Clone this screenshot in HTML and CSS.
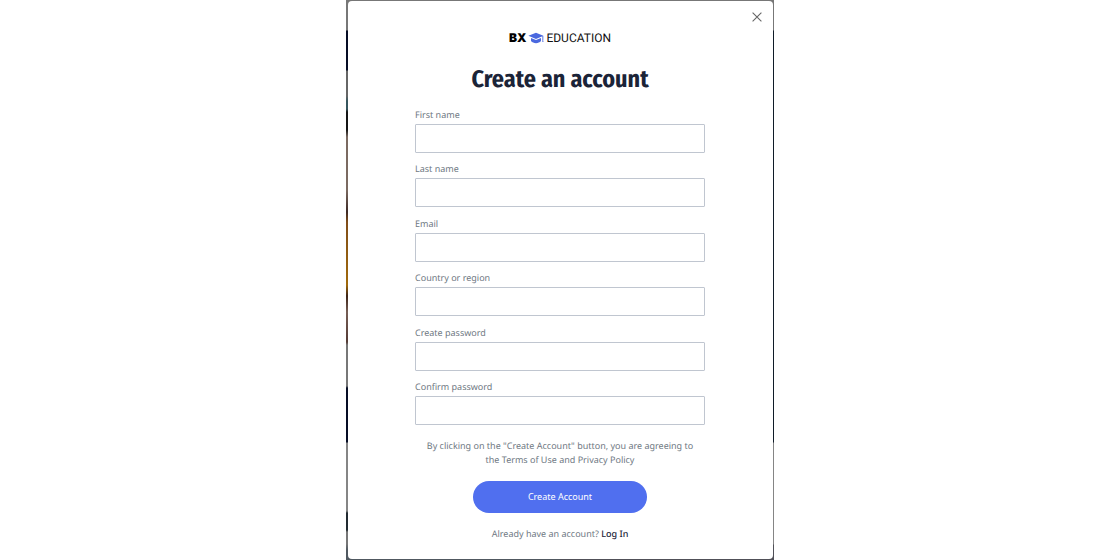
FILE: index.html
```html
<!DOCTYPE html>
<html lang="en">
<head>
<meta charset="utf-8">
<meta name="viewport" content="width=device-width, initial-scale=1">
<title>Create an account</title>
<link rel="stylesheet" href="styles.css">
</head>
<body>
<div class="backdrop">
  <main class="dialog" role="dialog" aria-labelledby="title">
    <button class="close" type="button" aria-label="Close">
      <svg viewBox="0 0 10 10" width="10" height="10" aria-hidden="true"><path d="M.6.6 9.4 9.4M9.4.6.6 9.4"/></svg>
    </button>
    <div class="logo">
      <span class="logo-mark">BX</span>
      <svg class="logo-cap" viewBox="0 0 16 12" width="16" height="12" aria-hidden="true">
        <path d="M8 .8.4 3.800 8 6.900l6.400-2.600v3.900h.9V3.800z"/>
        <path d="M3 5.900v3.200c1.200 1.500 3 2.100 5 2.100s3.800-.6 5-2.100V5.900L8 7.900z"/>
        <path d="m14.800 7.700-.8 2h1.700z"/>
      </svg>
      <span>EDUCATION</span>
    </div>
    <h1 class="title" id="title">Create an account</h1>
    <form class="form">
      <div class="fields">
        <div class="field"><label for="first">First name</label><input id="first" type="text"></div>
        <div class="field"><label for="last">Last name</label><input id="last" type="text"></div>
        <div class="field"><label for="email">Email</label><input id="email" type="email"></div>
        <div class="field"><label for="country">Country or region</label><input id="country" type="text"></div>
        <div class="field"><label for="password">Create password</label><input id="password" type="password"></div>
        <div class="field"><label for="confirm">Confirm password</label><input id="confirm" type="password"></div>
      </div>
      <p class="terms">By clicking on the "Create Account" button, you are agreeing to the Terms of Use and Privacy Policy</p>
      <button class="submit" type="submit">Create Account</button>
      <p class="login">Already have an account? <a href="#login">Log In</a></p>
    </form>
  </main>
</div>
</body>
</html>
```
FILE: styles.css
```css
* {
  box-sizing: border-box;
}

body {
  margin: 0;
  background: #fff;
  color: #6f7983;
  font: 9px/14px "Noto Sans", sans-serif;
  text-rendering: geometricPrecision;
}

.backdrop {
  display: flex;
  max-width: 428px;
  min-height: 100vh;
  margin: 0 auto;
  padding: 1px 1px 1px 2px;
  background:
    linear-gradient(#777 0 30px, #101c28 31px 442px, #858585 443px 544px, #505058 545px) right / 50% 100% no-repeat,
    linear-gradient(#777 0 30px, #060d25 31px 70px, #666 71px 96px, #36565e 101px 109px, #151515 112px 130px, #7b6a61 137px 190px, #3c2925 212px, #804d19 222px, #a16a0b 285px, #3c2317 296px, #765e55 312px, #543b35 342px, #777 345px 386px, #060d25 388px 442px, #858585 443px 511px, #222b31 513px 530px, #777 532px 544px, #505860 550px) left / 50% 100% no-repeat;
}

.dialog {
  position: relative;
  display: flex;
  flex: 1;
  flex-direction: column;
  align-items: center;
  padding: 28px 25px 18px 24px;
  border-radius: 4px;
  background: #fff;
}

.close {
  position: absolute;
  top: 7px;
  right: 7px;
  padding: 4px;
  border: 0;
  background: none;
  line-height: 0;
}

.close path {
  fill: none;
  stroke: #666;
  stroke-width: 1.1;
}

.logo {
  display: flex;
  align-items: center;
  gap: 2px;
  color: #111;
  font: 12px/18px Roboto, sans-serif;
}

.logo-mark {
  color: #000;
  font-family: Inter, sans-serif;
  font-weight: 900;
}

.logo-cap {
  fill: #4a68df;
}

.title {
  margin: 16px 0 11px;
  color: #1b2438;
  font: bold 24px/34px "Fira Sans Condensed", "Liberation Sans Narrow", Roboto, sans-serif;
}

.form {
  display: flex;
  flex: 1;
  flex-direction: column;
  align-items: center;
  width: 100%;
  max-width: 290px;
}

.fields {
  display: flex;
  flex: 1;
  flex-direction: column;
  justify-content: space-between;
  gap: 8px;
  width: 100%;
}

.field {
  display: flex;
  flex-direction: column;
  gap: 2px;
}

.field input {
  width: 100%;
  height: 29px;
  padding: 0 8px;
  border: 1px solid #c0c6d0;
  border-radius: 1px;
  background: #fff;
  color: #1b2438;
  font: inherit;
}

.terms {
  margin: 14px 0;
  padding: 0 8px;
  text-align: center;
}

.submit {
  width: 60%;
  height: 32px;
  border: 0;
  border-radius: 16px;
  background: #506fef;
  color: #fff;
  font: inherit;
}

.login {
  margin: 14px 0 0;
}

.login a {
  color: #1b2438;
  font-weight: 500;
  text-decoration: none;
}
```
